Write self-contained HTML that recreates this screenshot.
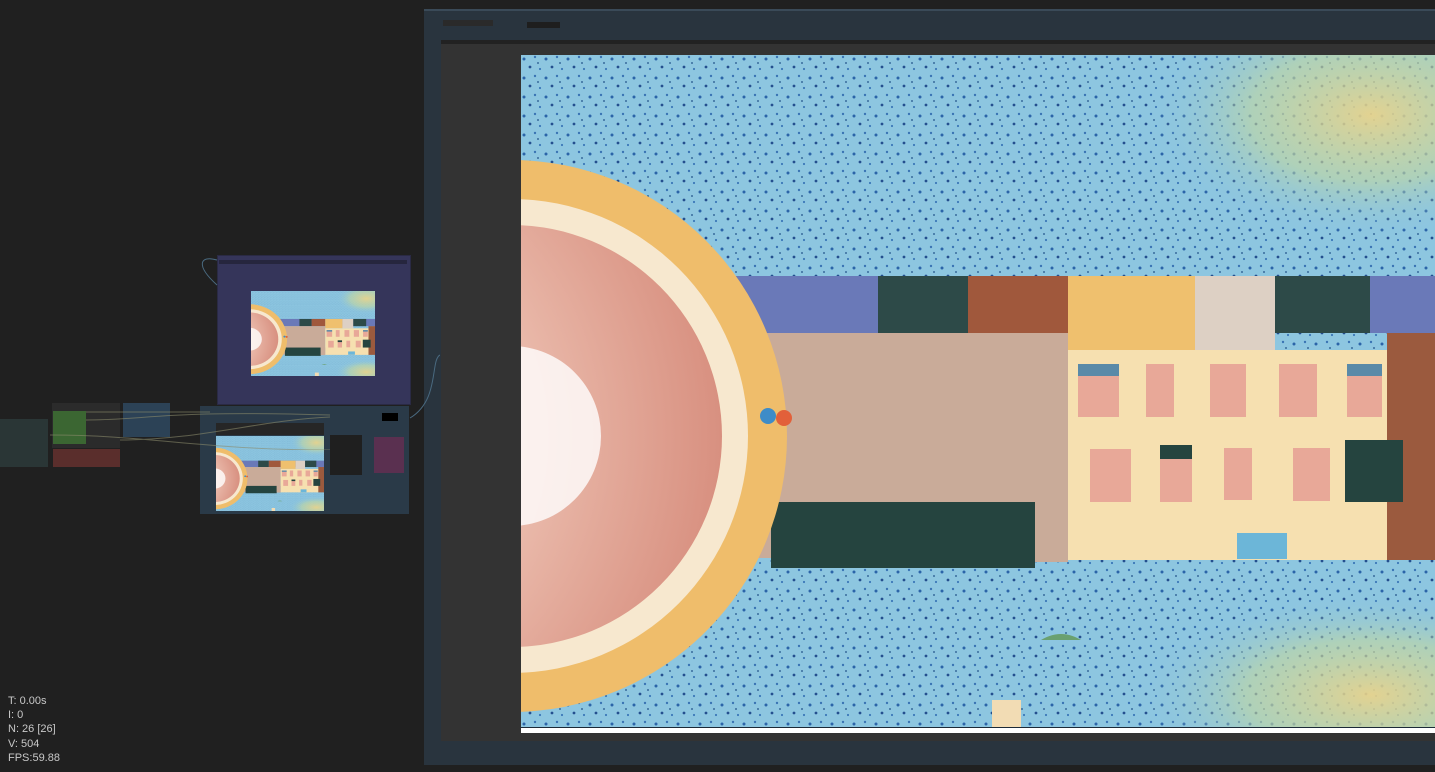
<!DOCTYPE html>
<html><head><meta charset="utf-8"><style>
body{margin:0;width:1435px;height:772px;background:#202020;overflow:hidden;position:relative;font-family:"Liberation Sans",sans-serif}
.a{position:absolute}
#stats{left:8px;top:694px;color:#c8c8c8;font-size:11px;line-height:14.2px}
</style></head><body>
<svg width="0" height="0" style="position:absolute">
<defs>
<pattern id="dots" width="22" height="19" patternUnits="userSpaceOnUse">
<circle cx="3" cy="4" r="1.5" fill="#2b64a8"/><circle cx="14" cy="2" r="1.2" fill="#3a74b4"/><circle cx="9" cy="12" r="1.4" fill="#244f8e"/><circle cx="19" cy="14" r="1.1" fill="#3c78b8"/><circle cx="17" cy="8" r=".9" fill="#1f4f86"/>
</pattern>
<radialGradient id="pk" cx="0" cy="0.5" r="1"><stop offset="0" stop-color="#fff"/><stop offset=".3" stop-color="#fbf0ea"/><stop offset=".5" stop-color="#ecbfb0"/><stop offset="1" stop-color="#d89080"/></radialGradient>
<radialGradient id="yl" cx=".5" cy=".5" r=".5"><stop offset="0" stop-color="#ecd488" stop-opacity=".9"/><stop offset=".55" stop-color="#c4d8a0" stop-opacity=".6"/><stop offset="1" stop-color="#8cc5e0" stop-opacity="0"/></radialGradient>
<symbol id="scene" viewBox="0 0 914 672" preserveAspectRatio="none">
<rect width="914" height="672" fill="#8dc6e0"/>
<rect width="914" height="672" fill="url(#dots)"/>
<ellipse cx="850" cy="60" rx="220" ry="120" fill="url(#yl)"/>
<ellipse cx="850" cy="640" rx="230" ry="100" fill="url(#yl)"/>
<rect x="212" y="221" width="702" height="57" fill="#6a79b8"/>
<rect x="357" y="221" width="90" height="57" fill="#2d4a48"/>
<rect x="447" y="221" width="100" height="57" fill="#a0583c"/>
<rect x="547" y="221" width="127" height="74" fill="#efc06e"/>
<rect x="674" y="221" width="80" height="74" fill="#ddd0c4"/>
<rect x="754" y="221" width="95" height="57" fill="#2d4a48"/>
<rect x="230" y="278" width="317" height="225" fill="#c9ab99"/>
<rect x="547" y="295" width="320" height="210" fill="#f6e0b0"/>
<rect x="866" y="278" width="48" height="227" fill="#9b5a3e"/>
<rect x="250" y="447" width="264" height="66" fill="#25443f"/>
<rect x="514" y="447" width="33" height="60" fill="#c9ab99"/>
<g fill="#e8a898"><rect x="557" y="309" width="41" height="53"/><rect x="625" y="309" width="28" height="53"/><rect x="689" y="309" width="36" height="53"/><rect x="758" y="309" width="38" height="53"/><rect x="826" y="309" width="35" height="53"/><rect x="569" y="394" width="41" height="53"/><rect x="639" y="390" width="32" height="57"/><rect x="703" y="393" width="28" height="52"/><rect x="772" y="393" width="37" height="53"/></g>
<g fill="#5a8aa8"><rect x="557" y="309" width="41" height="12"/><rect x="826" y="309" width="35" height="12"/><rect x="639" y="390" width="32" height="14" fill="#25443f"/></g>
<rect x="824" y="385" width="58" height="62" fill="#25443f"/>
<rect x="716" y="478" width="50" height="26" fill="#6cb6d8"/>
<circle cx="-10" cy="381" r="276" fill="#efbd6b"/>
<circle cx="-10" cy="381" r="237" fill="#f7e8cf"/>
<circle cx="-10" cy="381" r="211" fill="url(#pk)"/>
<circle cx="-10" cy="381" r="90" fill="#fff" opacity=".8"/>
<circle cx="247" cy="361" r="8" fill="#3e8cc8"/><circle cx="263" cy="363" r="8" fill="#e2603a"/>
<path d="M520 585 q20-12 40 0z" fill="#6aa070"/>
<rect x="471" y="645" width="29" height="27" fill="#f2dcb4"/>
</symbol>
</defs></svg>

<div class="a" style="left:424px;top:9px;width:1011px;height:756px;background:#29343e"></div>
<div class="a" style="left:424px;top:9px;width:1011px;height:2px;background:#3a4a58"></div>
<div class="a" style="left:443px;top:20px;width:50px;height:6px;background:#2a2a2a"></div>
<div class="a" style="left:527px;top:22px;width:33px;height:6px;background:#1e1e1e"></div>
<div class="a" style="left:441px;top:40px;width:994px;height:4px;background:#222"></div>
<div class="a" style="left:441px;top:44px;width:994px;height:697px;background:#333"></div>
<svg class="a" style="left:521px;top:55px" width="914" height="672"><use href="#scene" width="914" height="672"/></svg>
<div class="a" style="left:521px;top:727px;width:914px;height:5px;background:#fff;border-top:1px solid #1c2a38"></div>

<div class="a" style="left:217px;top:255px;width:192px;height:148px;background:#35355a;border:1px solid #2a2a44"></div>
<div class="a" style="left:219px;top:260px;width:188px;height:4px;background:#26263e"></div>
<svg class="a" style="left:251px;top:291px" width="124" height="85"><use href="#scene" width="124" height="85"/></svg>
<div class="a" style="left:200px;top:406px;width:209px;height:108px;background:#2a3a48"></div>
<div class="a" style="left:216px;top:423px;width:108px;height:12px;background:#262626"></div>
<svg class="a" style="left:216px;top:436px" width="108" height="75"><use href="#scene" width="108" height="75"/></svg>
<div class="a" style="left:330px;top:435px;width:32px;height:40px;background:#1f1f1f"></div>
<div class="a" style="left:374px;top:437px;width:30px;height:36px;background:#5a3050"></div>
<div class="a" style="left:382px;top:413px;width:16px;height:8px;background:#000"></div>
<div class="a" style="left:123px;top:403px;width:47px;height:34px;background:#2c4256"></div>
<div class="a" style="left:52px;top:403px;width:68px;height:45px;background:#2b2b2b"></div>
<div class="a" style="left:53px;top:411px;width:33px;height:33px;background:#3b6632"></div>
<div class="a" style="left:53px;top:449px;width:67px;height:18px;background:#5a2e2c"></div>
<div class="a" style="left:0;top:419px;width:48px;height:48px;background:#2a3636"></div>
<svg class="a" style="left:0;top:250px" width="440" height="200"><g fill="none" stroke="#8a8a6a" stroke-width="1" opacity=".6"><path d="M86 162 H210 M86 170 C150 170 160 160 330 165 M120 190 C200 190 260 170 330 167 M50 185 C150 185 200 200 330 200"/></g><path d="M410 168 C440 150 430 110 440 105" stroke="#4a6a80" fill="none"/><path d="M217 35 C195 15 200 5 217 10" stroke="#4a6a80" fill="none"/></svg>

<div id="stats" class="a">T: 0.00s<br>I: 0<br>N: 26 [26]<br>V: 504<br>FPS:59.88</div>
</body></html>
